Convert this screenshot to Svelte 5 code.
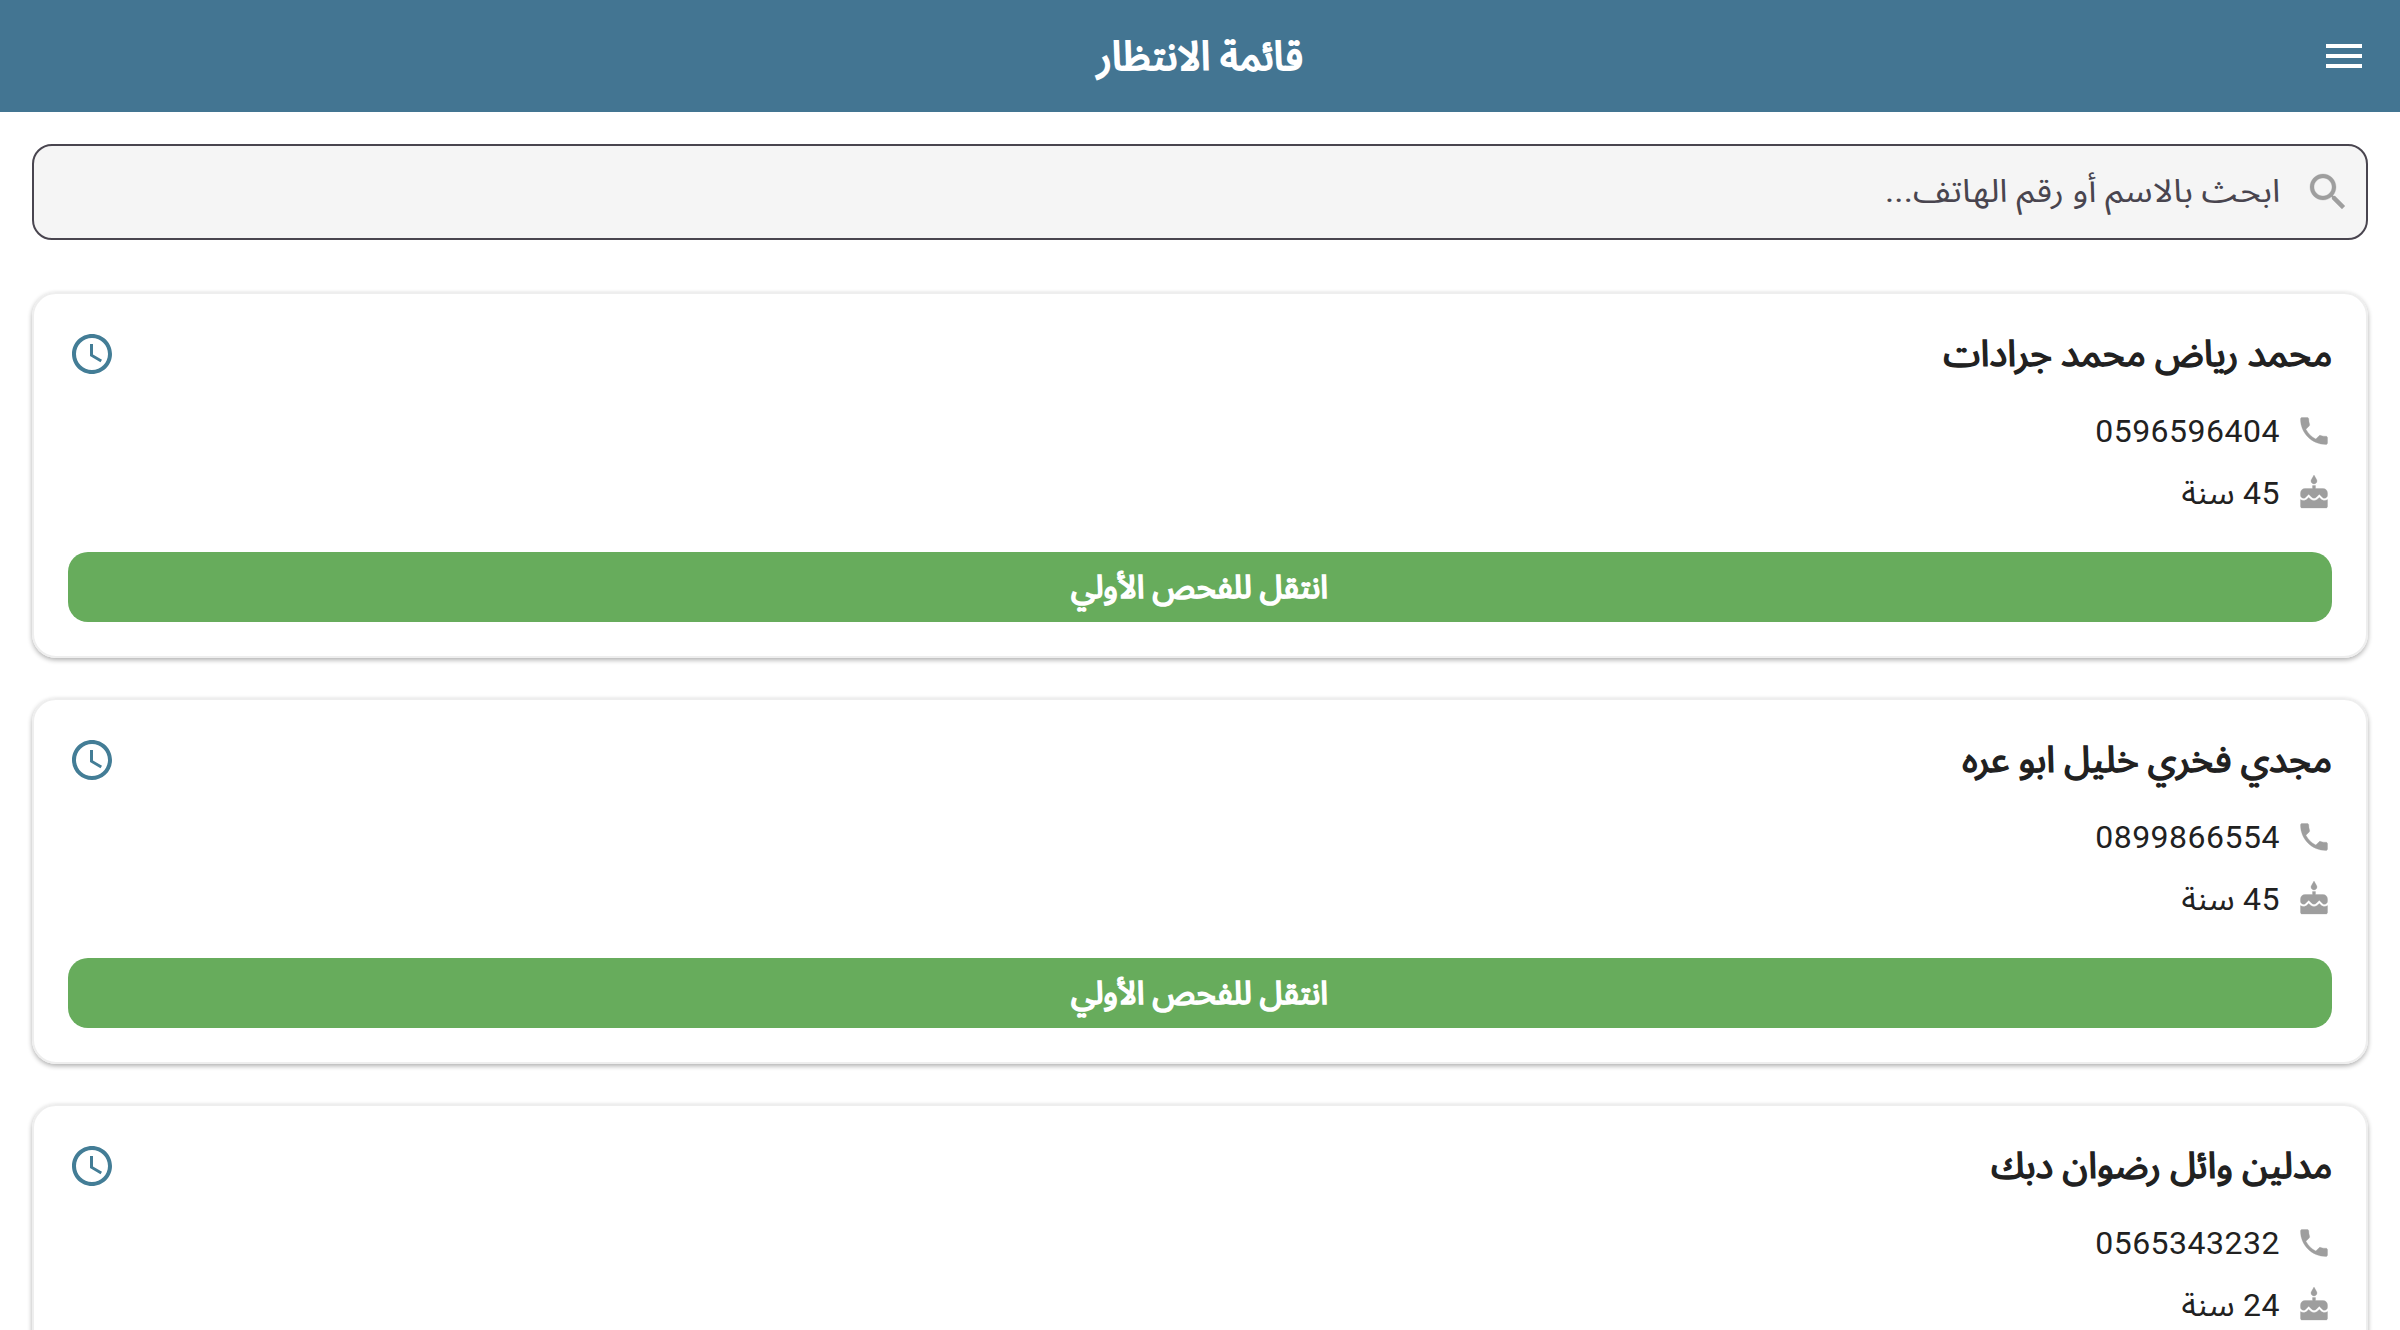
<script lang="ts">
  const patients = [
    { name: 'محمد رياض محمد جرادات', phone: '0596596404', age: 45 },
    { name: 'مجدي فخري خليل ابو عره', phone: '0899866554', age: 45 },
    { name: 'مدلين وائل رضوان دبك', phone: '0565343232', age: 24 },
  ];
</script>

<div class="page" dir="rtl">
  <header>
    <svg class="menu" viewBox="0 0 24 24"><path d="M3 18h18v-2H3v2zm0-5h18v-2H3v2zm0-7v2h18V6H3z" /></svg>
    <h1>قائمة الانتظار</h1>
    <div class="spacer"></div>
  </header>
  <main>
    <div class="search">
      <svg viewBox="0 0 24 24"><path d="M15.5 14h-.79l-.28-.27C15.41 12.59 16 11.11 16 9.5 16 5.91 13.09 3 9.5 3S3 5.91 3 9.5 5.91 16 9.5 16c1.61 0 3.09-.59 4.23-1.57l.27.28v.79l5 4.99L20.49 19l-4.99-5zm-6 0C7.01 14 5 11.99 5 9.5S7.01 5 9.5 5 14 7.01 14 9.5 11.99 14 9.5 14z" /></svg>
      <span class="hint">ابحث بالاسم أو رقم الهاتف...</span>
    </div>
    {#each patients as p}
      <article>
        <div class="top">
          <h2>{p.name}</h2>
          <svg class="clock" viewBox="0 0 24 24"><path d="M11.99 2C6.47 2 2 6.48 2 12s4.47 10 9.99 10C17.52 22 22 17.52 22 12S17.52 2 11.99 2zM12 20c-4.42 0-8-3.58-8-8s3.58-8 8-8 8 3.58 8 8-3.58 8-8 8zm.5-13H11v6l5.25 3.15.75-1.23-4.5-2.67z" /></svg>
        </div>
        <div class="row">
          <svg viewBox="0 0 24 24"><path d="M6.62 10.79c1.44 2.83 3.76 5.14 6.59 6.59l2.2-2.2c.27-.27.67-.36 1.02-.24 1.12.37 2.33.57 3.57.57.55 0 1 .45 1 1V20c0 .55-.45 1-1 1-9.39 0-17-7.61-17-17 0-.55.45-1 1-1h3.5c.55 0 1 .45 1 1 0 1.25.2 2.45.57 3.57.11.35.03.74-.25 1.02l-2.2 2.2z" /></svg>
          <span>{p.phone}</span>
        </div>
        <div class="row">
          <svg viewBox="0 0 24 24"><path d="M12 6c1.11 0 2-.9 2-2 0-.38-.1-.73-.29-1.03L12 0l-1.71 2.97c-.19.3-.29.65-.29 1.03 0 1.1.9 2 2 2zm4.6 9.99l-1.07-1.07-1.08 1.07c-1.3 1.3-3.58 1.31-4.89 0l-1.07-1.07-1.09 1.07C6.75 16.64 5.88 17 4.96 17c-.73 0-1.4-.23-1.96-.61V21c0 .55.45 1 1 1h16c.55 0 1-.45 1-1v-4.61c-.56.38-1.23.61-1.96.61-.92 0-1.79-.36-2.44-1.01zM18 9h-5V7h-2v2H6c-1.66 0-3 1.34-3 3v1.54c0 1.08.88 1.96 1.96 1.96.52 0 1.02-.2 1.38-.57l2.14-2.13 2.13 2.13c.74.74 2.03.74 2.77 0l2.14-2.13 2.13 2.13c.37.37.86.57 1.38.57 1.08 0 1.96-.88 1.96-1.96V12C21 10.34 19.66 9 18 9z" /></svg>
          <span>{p.age} <span class="unit">سنة</span></span>
        </div>
        <button><span class="label">انتقل للفحص الأولي</span></button>
      </article>
    {/each}
  </main>
</div>

<style>
  :global(body) { margin: 0; background: #fff; }
  .page { height: 1330px; overflow: hidden; font-family: Roboto, "Noto Sans Arabic", "DejaVu Sans", sans-serif; color: #212121; }
  svg { display: block; flex: none; fill: #9e9e9e; }
  header { height: 112px; background: #437592; display: flex; align-items: center; padding: 0 32px; }
  .menu, .spacer { width: 48px; height: 48px; fill: #fff; }
  h1 { flex: 1; margin: 0; padding-top: 1px; text-align: center; color: #fff; font-size: 40px; font-weight: 400; -webkit-text-stroke: 2px currentColor; line-height: 60px; white-space: nowrap; }
  main { padding: 32px; }
  .search { box-sizing: border-box; height: 96px; border: 2px solid #49454f; border-radius: 20px; background: #f5f5f5; display: flex; align-items: center; gap: 24px; padding: 0 14px; margin-bottom: 52px; color: #49454f; font-size: 32px; letter-spacing: 1px; white-space: nowrap; }
  .search svg { width: 48px; height: 48px; stroke: #9e9e9e; stroke-width: .15; }
  /* Arabic runs ignore letter-spacing, so they are widened by a scale */
  .hint { transform: scaleX(1.1); transform-origin: right; }
  article { box-sizing: border-box; height: 366px; margin-bottom: 40px; border: 2px solid #eee; border-radius: 24px; padding: 34px; box-shadow: 0 2px 5px rgba(0,0,0,.32); }
  .top { display: flex; align-items: center; justify-content: space-between; height: 52px; margin-bottom: 20px; }
  .clock { width: 48px; height: 48px; fill: #437d96; }
  h2 { margin: 0; padding-bottom: 1px; font-size: 36px; font-weight: 400; -webkit-text-stroke: 1.4px currentColor; line-height: 52px; white-space: nowrap; transform: scaleX(1.036); transform-origin: right; }
  .row { display: flex; align-items: center; gap: 16px; height: 62px; font-size: 32px; letter-spacing: .5px; line-height: 46px; white-space: nowrap; }
  .row svg { width: 36px; height: 36px; stroke: #9e9e9e; stroke-width: .2; }
  .unit { display: inline-block; transform: scaleX(1.03); transform-origin: right; }
  button { display: block; width: 100%; height: 70px; margin-top: 28px; padding: 1px 0 0; border: 0; border-radius: 20px; background: #67ac5c; color: #fff; font-family: inherit; font-size: 32px; font-weight: 400; -webkit-text-stroke: 1.7px currentColor; }
  .label { display: inline-block; transform: scaleX(1.016); }
</style>
